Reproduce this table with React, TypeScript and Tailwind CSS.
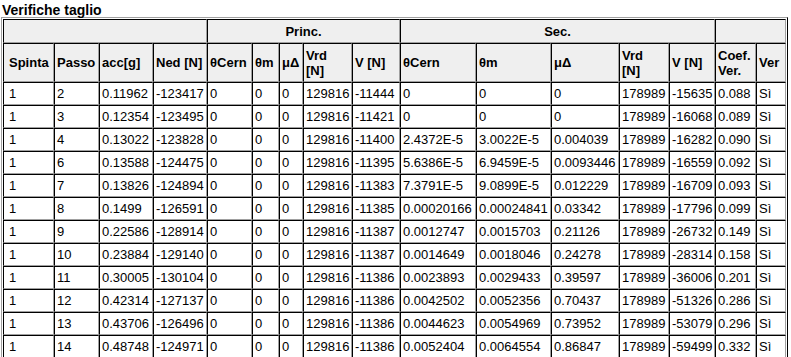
import React from "react";

const cols = [51, 45, 54, 54, 45, 27, 24, 49, 48, 76, 75, 68, 50, 46, 41, 30];

const rows: string[][] = [
  ["1", "2", "0.11962", "-123417", "0", "0", "0", "129816", "-11444", "0", "0", "0", "178989", "-15635", "0.088", "Sì"],
  ["1", "3", "0.12354", "-123495", "0", "0", "0", "129816", "-11421", "0", "0", "0", "178989", "-16068", "0.089", "Sì"],
  ["1", "4", "0.13022", "-123828", "0", "0", "0", "129816", "-11400", "2.4372E-5", "3.0022E-5", "0.004039", "178989", "-16282", "0.090", "Sì"],
  ["1", "6", "0.13588", "-124475", "0", "0", "0", "129816", "-11395", "5.6386E-5", "6.9459E-5", "0.0093446", "178989", "-16559", "0.092", "Sì"],
  ["1", "7", "0.13826", "-124894", "0", "0", "0", "129816", "-11383", "7.3791E-5", "9.0899E-5", "0.012229", "178989", "-16709", "0.093", "Sì"],
  ["1", "8", "0.1499", "-126591", "0", "0", "0", "129816", "-11385", "0.00020166", "0.00024841", "0.03342", "178989", "-17796", "0.099", "Sì"],
  ["1", "9", "0.22586", "-128914", "0", "0", "0", "129816", "-11387", "0.0012747", "0.0015703", "0.21126", "178989", "-26732", "0.149", "Sì"],
  ["1", "10", "0.23884", "-129140", "0", "0", "0", "129816", "-11387", "0.0014649", "0.0018046", "0.24278", "178989", "-28314", "0.158", "Sì"],
  ["1", "11", "0.30005", "-130104", "0", "0", "0", "129816", "-11386", "0.0023893", "0.0029433", "0.39597", "178989", "-36006", "0.201", "Sì"],
  ["1", "12", "0.42314", "-127137", "0", "0", "0", "129816", "-11386", "0.0042502", "0.0052356", "0.70437", "178989", "-51326", "0.286", "Sì"],
  ["1", "13", "0.43706", "-126496", "0", "0", "0", "129816", "-11386", "0.0044623", "0.0054969", "0.73952", "178989", "-53079", "0.296", "Sì"],
  ["1", "14", "0.48748", "-124971", "0", "0", "0", "129816", "-11386", "0.0052404", "0.0064554", "0.86847", "178989", "-59499", "0.332", "Sì"],
];

const cell =
  "border-t border-l border-r border-b border-t-black border-l-black border-r-[#a0a0a0] border-b-[#a0a0a0] py-0 align-middle whitespace-nowrap";
const pad = " px-[2px]";
const padFirst = " pl-[5px] pr-[2px]";
const head = cell + " bg-[#efefef] font-bold text-left leading-[15px]";

export default function App() {
  return (
    <div className="bg-white text-black text-[13px] w-[791px] h-[357px] overflow-hidden" style={{ fontFamily: '"Liberation Sans", Arial, sans-serif' }}>
      <div className="pl-[2px] pt-[3px] font-bold leading-[14px] text-[14px]">Verifiche taglio</div>
      <table className="ml-px w-[787px] table-fixed border-separate border-spacing-0 border border-t-[#a0a0a0] border-l-[#a0a0a0] border-r-black border-b-black p-px">
        <colgroup>
          {cols.map((w, i) => (
            <col key={i} style={{ width: w }} />
          ))}
        </colgroup>
        <thead>
          <tr>
            <th colSpan={4} className={head + pad + " h-[24px]"}></th>
            <th colSpan={5} className={head + pad + " h-[24px] !text-center"}>Princ.</th>
            <th colSpan={5} className={head + pad + " h-[24px] !text-center"}>Sec.</th>
            <th colSpan={2} className={head + pad + " h-[24px]"}></th>
          </tr>
          <tr>
            <th className={head + padFirst + " h-[39px]"}>Spinta</th>
            <th className={head + pad}>Passo</th>
            <th className={head + pad}>acc[g]</th>
            <th className={head + pad}>Ned [N]</th>
            <th className={head + pad}>θCern</th>
            <th className={head + pad}>θm</th>
            <th className={head + pad}>μΔ</th>
            <th className={head + pad}>Vrd<br />[N]</th>
            <th className={head + pad}>V [N]</th>
            <th className={head + pad}>θCern</th>
            <th className={head + pad}>θm</th>
            <th className={head + pad}>μΔ</th>
            <th className={head + pad}>Vrd<br />[N]</th>
            <th className={head + pad}>V [N]</th>
            <th className={head + pad}>Coef.<br />Ver.</th>
            <th className={head + pad}>Ver</th>
          </tr>
        </thead>
        <tbody>
          {rows.map((r, i) => (
            <tr key={i}>
              {r.map((v, j) => (
                <td key={j} className={cell + (j === 0 ? padFirst : pad) + " h-[23px] leading-[15px]"}>
                  {v}
                </td>
              ))}
            </tr>
          ))}
        </tbody>
      </table>
    </div>
  );
}
